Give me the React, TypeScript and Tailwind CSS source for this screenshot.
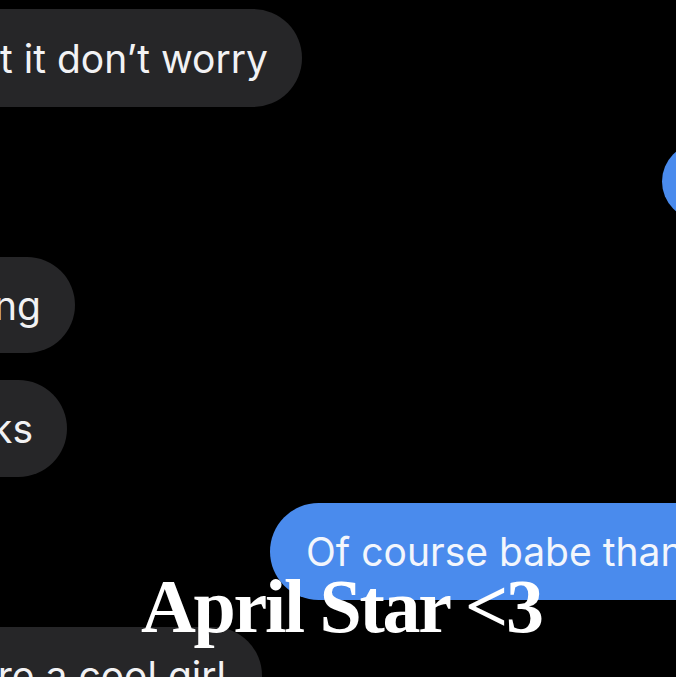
import React from 'react';

const gray = 'bg-[#262628] text-[#f2f2f4]';
const blue = 'bg-[#4a8bed] text-[#f3f6fc]';

export default function App() {
  return (
    <div className="relative w-[676px] h-[677px] overflow-hidden bg-black font-['Inter','Noto_Sans',sans-serif]">
      <div className="flex flex-col text-[39px] leading-none whitespace-nowrap">
        {/* left: received */}
        <div className={`mt-[9px] h-[98px] w-[362px] -ml-[60px] rounded-full flex items-center justify-end pr-[34px] ${gray}`}>
          t it don’t worry
        </div>

        {/* right: sent, text off screen */}
        <div className={`mt-[36px] h-[77px] w-[300px] ml-[662px] rounded-full shrink-0 ${blue}`} />

        <div className={`mt-[37px] h-[96px] w-[135px] -ml-[60px] rounded-full flex items-center justify-end pr-[34px] ${gray}`}>
          ng
        </div>

        <div className={`mt-[27px] h-[97px] w-[127px] -ml-[60px] rounded-full flex items-center justify-end pr-[34px] ${gray}`}>
          ks
        </div>

        <div className={`mt-[26px] h-[97px] w-[600px] ml-[270px] rounded-full flex items-center pl-[36px] shrink-0 ${blue}`}>
          Of course babe thank you
        </div>

        <div className={`mt-[27px] h-[97px] w-[322px] -ml-[60px] rounded-full flex items-center justify-end pr-[36px] ${gray}`}>
          re a cool girl
        </div>
      </div>

      {/* caption over the screenshot */}
      <div className="absolute left-[141px] top-[568px] text-white font-['Liberation_Serif',serif] font-bold text-[76px] leading-none tracking-[-0.03em]">
        April Star &lt;3
      </div>
    </div>
  );
}
